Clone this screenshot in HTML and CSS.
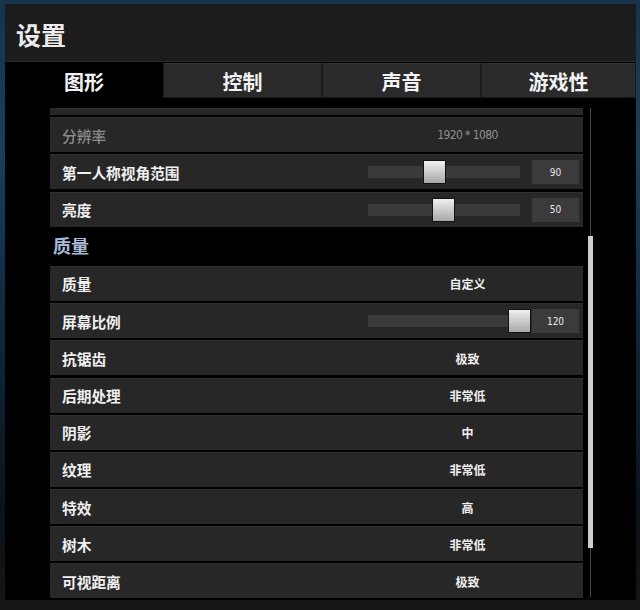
FILE: index.html
```html
<!DOCTYPE html>
<html lang="zh-CN">
<head>
<meta charset="utf-8">
<title>设置</title>
<link rel="stylesheet" href="styles.css">
</head>
<body>
<div class="window">
  <header class="titlebar"><h1>设置</h1></header>
  <nav class="tabs">
    <div class="tab active">图形</div>
    <div class="tab">控制</div>
    <div class="tab">声音</div>
    <div class="tab">游戏性</div>
  </nav>
  <main class="content">
    <div class="list">
      <div class="row partial"></div>
      <div class="row disabled"><span class="label">分辨率</span><span class="value num">1920 * 1080</span></div>
      <div class="row"><span class="label">第一人称视角范围</span>
        <div class="slider"><div class="track"><div class="thumb" style="left:55px"></div></div><div class="box">90</div></div></div>
      <div class="row"><span class="label">亮度</span>
        <div class="slider"><div class="track"><div class="thumb" style="left:64px"></div></div><div class="box">50</div></div></div>
      <div class="section">质量</div>
      <div class="row"><span class="label">质量</span><span class="value">自定义</span></div>
      <div class="row"><span class="label">屏幕比例</span>
        <div class="slider"><div class="track"><div class="thumb" style="left:140px"></div></div><div class="box">120</div></div></div>
      <div class="row"><span class="label">抗锯齿</span><span class="value">极致</span></div>
      <div class="row"><span class="label">后期处理</span><span class="value">非常低</span></div>
      <div class="row"><span class="label">阴影</span><span class="value">中</span></div>
      <div class="row"><span class="label">纹理</span><span class="value">非常低</span></div>
      <div class="row"><span class="label">特效</span><span class="value">高</span></div>
      <div class="row"><span class="label">树木</span><span class="value">非常低</span></div>
      <div class="row"><span class="label">可视距离</span><span class="value">极致</span></div>
    </div>
    <div class="scrollbar"><div class="scroll-thumb"></div></div>
  </main>
</div>
</body>
</html>
```

FILE: styles.css
```css
html, body {
  margin: 0;
  padding: 0;
}
body {
  width: 640px;
  height: 610px;
  overflow: hidden;
  background: linear-gradient(to bottom, #15344c 0%, #1a3f5c 25%, #10263a 55%, #0b1218 85%, #151515 98%);
  font-family: "Noto Sans CJK SC", "Noto Sans", sans-serif;
  color: #fff;
}
.window {
  margin: 4px 5px 0 5px;
  width: 631px;
  height: 596px;
  background: #000;
  display: flex;
  flex-direction: column;
  overflow: hidden;
}
.titlebar {
  height: 58px;
  background: #1d1c1c;
  display: flex;
  align-items: center;
  padding-left: 11px;
  border-bottom: 1px solid #2a2a2a;
  box-sizing: border-box;
}
.titlebar h1 {
  margin: 0;
  font-size: 25px;
  font-weight: 700;
  color: #ececec;
  line-height: 1;
  padding-top: 4px;
}
.tabs {
  height: 37px;
  display: flex;
  background: #000;
}
.tab {
  width: 159px;
  flex: none;
  display: flex;
  align-items: center;
  justify-content: center;
  font-size: 20px;
  font-weight: 700;
  color: #f2f2f2;
  background: #2a2a2a;
  border: 1px solid #1a1a1a;
  border-top: 1px solid #333;
  box-sizing: border-box;
  margin-top: 1px;
  margin-bottom: 1px;
  padding-top: 2px;
}
.tab.active {
  width: 158px;
  background: #000;
  border-color: #000;
}
.tab:last-child {
  flex: 1;
}
.content {
  flex: 1;
  display: flex;
  padding: 9px 0 0 45px;
  background: #000;
}
.list {
  width: 533px;
  display: flex;
  flex-direction: column;
  gap: 2.2px;
}
.row {
  height: 35px;
  flex: none;
  background: #272727;
  display: flex;
  align-items: center;
  box-sizing: border-box;
  border-top: 1px solid #2f2f2f;
}
.row.partial {
  height: 7px;
}
.label {
  flex: 1;
  padding-left: 12px;
  font-size: 14.7px;
  font-weight: 700;
  color: #f0f0f0;
}
.value {
  width: 231px;
  text-align: center;
  font-size: 12px;
  font-weight: 700;
  color: #f0f0f0;
}
.row.disabled .label {
  color: #8c8c8c;
  font-weight: 500;
}
.value.num {
  font-family: "DejaVu Sans Condensed", "Liberation Sans", sans-serif;
  font-weight: 400;
  font-size: 12px;
  color: #8e8e8e;
  letter-spacing: -0.6px;
}
.slider {
  width: 231px;
  box-sizing: border-box;
  padding: 0 4px 0 16px;
  display: flex;
  align-items: center;
  gap: 12px;
}
.track {
  position: relative;
  width: 152px;
  height: 12px;
  background: #3a3a3a;
}
.thumb {
  position: absolute;
  top: -6px;
  width: 23px;
  height: 24px;
  box-sizing: border-box;
  border: 1px solid #111;
  background: linear-gradient(to bottom, #f0f0f0, #c4c4c4 60%, #a8a8a8);
}
.box {
  width: 47px;
  height: 24px;
  background: #3b3b3b;
  display: flex;
  align-items: center;
  justify-content: center;
  font-family: "DejaVu Sans Condensed", "Liberation Sans", sans-serif;
  font-size: 10px;
  color: #e8e8e8;
}
.section {
  height: 35px;
  flex: none;
  display: flex;
  align-items: center;
  padding-left: 3px;
  padding-bottom: 3px;
  box-sizing: border-box;
  font-size: 18px;
  font-weight: 700;
  color: #a9bad9;
}
.scrollbar {
  position: relative;
  width: 5px;
  margin-left: 5px;
  height: 489px;
  flex: none;
  display: flex;
  justify-content: center;
}
.scrollbar::before {
  content: "";
  width: 1px;
  height: 100%;
  background: #4a4a4a;
}
.scroll-thumb {
  position: absolute;
  left: 0;
  top: 128px;
  width: 5px;
  height: 312px;
  background: #cdcdcd;
}
```
